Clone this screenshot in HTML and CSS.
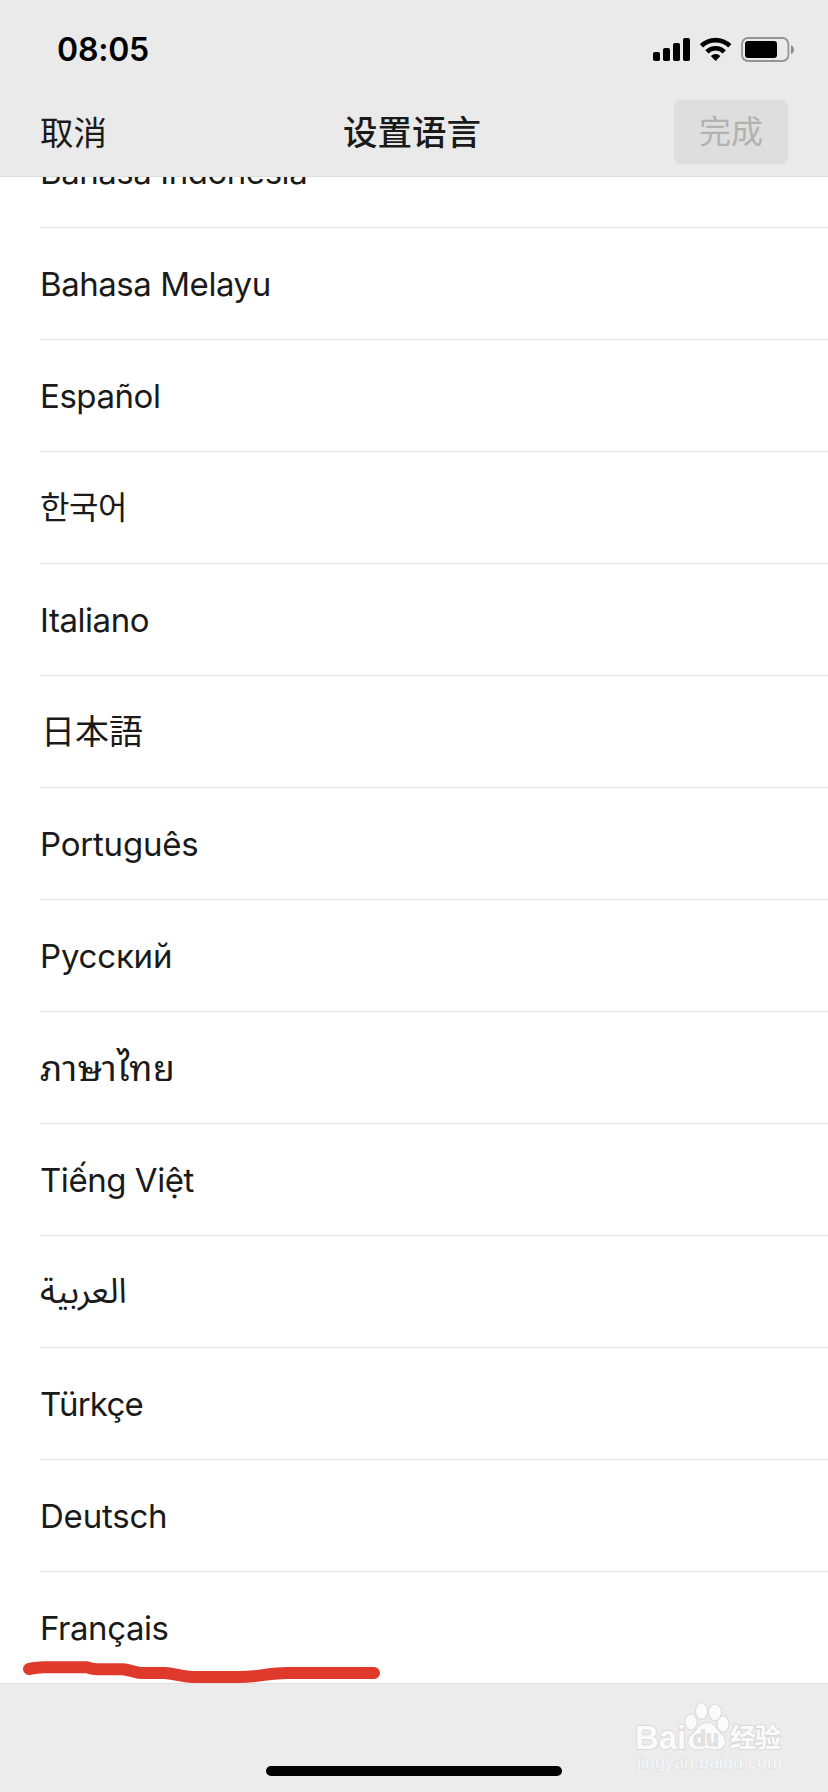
FILE: index.html
```html
<!DOCTYPE html>
<html lang="zh-CN">
<head>
<meta charset="utf-8">
<title>设置语言</title>
<link rel="stylesheet" href="styles.css">
</head>
<body>
<div class="screen">
  <header class="header">
    <div class="status">
      <span class="time">08:05</span>
      <svg class="status-icons" width="144" height="28" viewBox="0 0 144 28">
        <rect x="0" y="15" width="7" height="9" rx="1.8"/>
        <rect x="10" y="11" width="7" height="13" rx="1.8"/>
        <rect x="20" y="6" width="7" height="18" rx="1.8"/>
        <rect x="30" y="1" width="7" height="23" rx="1.8"/>
        <path d="M46.8 7.2A22.5 22.5 0 0 1 78.4 7.2L75.2 10.600A18 18 0 0 0 50 10.600ZM52.3 13.200A14.6 14.6 0 0 1 72.9 13.200L69.7 16.400A10 10 0 0 0 55.5 16.400ZM57.8 19A7 7 0 0 1 67.4 19L62.6 24Z"/>
        <rect class="battery-shell" x="89" y="1" width="46.4" height="23" rx="6"/>
        <rect x="92" y="4" width="32" height="17" rx="3"/>
        <path class="battery-tip" d="M138 8.3C142 10 142 15.4 138 17Z"/>
      </svg>
    </div>
    <nav class="nav">
      <span class="cancel">取消</span>
      <h1 class="title">设置语言</h1>
      <span class="done">完成</span>
    </nav>
  </header>
  <main class="viewport">
    <ul class="list">
      <li class="row"><span class="label tight">Bahasa Indonesia</span></li>
      <li class="row"><span class="label tight">Bahasa Melayu</span></li>
      <li class="row"><span class="label tight">Español</span></li>
      <li class="row"><span class="label korean" lang="ko">한국어</span></li>
      <li class="row"><span class="label tight">Italiano</span></li>
      <li class="row"><span class="label japanese" lang="ja">日本語</span></li>
      <li class="row"><span class="label">Português</span></li>
      <li class="row"><span class="label">Русский</span></li>
      <li class="row"><span class="label thai" lang="th">ภาษาไทย</span></li>
      <li class="row"><span class="label tight">Tiếng Việt</span></li>
      <li class="row"><span class="label arabic" lang="ar">العربية</span></li>
      <li class="row"><span class="label tighter">Türkçe</span></li>
      <li class="row"><span class="label">Deutsch</span></li>
      <li class="row"><span class="label tight">Français</span></li>
    </ul>
  </main>
  <footer class="footer">
    <div class="home-bar"></div>
  </footer>
  <svg class="marker" width="370" height="34" viewBox="0 0 370 34">
    <path d="M14 14Q24 12 30 12.200H72Q76 14 82 14.200H108C116 15 120 18 126 18H150C162 19 168 22 178 22H224C244 22 254 18 272 18H359"/>
  </svg>
  <svg class="watermark" width="160" height="80" viewBox="0 0 160 80">
    <text class="wm-logo" x="3" y="49" textLength="51" lengthAdjust="spacingAndGlyphs">Bai</text>
    <g class="wm-paw">
      <ellipse cx="59" cy="22" rx="5.5" ry="7.5"/>
      <ellipse cx="69.500" cy="11" rx="5.5" ry="7.8"/>
      <ellipse cx="83" cy="12.500" rx="6" ry="7.800"/>
      <ellipse cx="91" cy="24" rx="5.500" ry="7.500"/>
      <path d="M75 23C68 23 66 29 61 34C54 39 55 49 64 49C69 50 71 48 75 48S81 50 86 49C95 48 95 38 88 33C84 28 82 23 75 23Z"/>
    </g>
    <text class="wm-du" x="61" y="46" textLength="26" lengthAdjust="spacingAndGlyphs">du</text>
    <text class="wm-cn" x="98" y="47" textLength="51">经验</text>
    <text class="wm-url" x="5" y="68" textLength="145" lengthAdjust="spacingAndGlyphs">jingyan.baidu.com</text>
  </svg>
</div>
</body>
</html>
```
FILE: styles.css
```css
* { box-sizing: border-box; }
body { margin: 0; background: #ececec; }
.screen {
  position: relative;
  display: flex;
  flex-direction: column;
  width: 828px;
  height: 1792px;
  overflow: hidden;
  color: #1a1a1a;
  font-family: Inter, "Noto Sans CJK SC", sans-serif;
}
.header {
  height: 177px;
  background: #eaeaea;
  border-bottom: 1px solid #dedede;
}
.status {
  display: flex;
  justify-content: space-between;
  height: 88px;
  padding: 30px 26px 0 57px;
  color: #000;
}
.time { font-size: 32px; line-height: 40px; font-weight: 600; letter-spacing: -0.2px; }
.status-icons { margin: 7px 5px 0 0; }
.battery-shell { fill: none; stroke: #949494; stroke-width: 1.8; }
.battery-tip { fill: #8a8a8a; }
.nav {
  display: grid;
  grid-template-columns: 1fr auto 1fr;
  align-items: center;
  height: 88px;
  padding: 0 40px;
}
.cancel { padding-top: 2px; font-size: 33.5px; line-height: 48px; }
.title { margin: 0; padding: 2px 4px 0 0; font-size: 34.5px; line-height: 48px; font-weight: 500; }
.done {
  justify-self: end;
  width: 114px;
  height: 64px;
  border-radius: 6px;
  background: #dedede;
  color: #b2b2b2;
  font-size: 32px;
  line-height: 64px;
  text-align: center;
}
.viewport { height: 1506px; overflow: hidden; background: #fff; }
.list { margin: -61px 0 0 40px; padding: 0; list-style: none; }
.row {
  display: flex;
  align-items: center;
  height: 112px;
  border-bottom: 1px solid #e2e2e2;
}
.label { font-size: 33px; line-height: 48px; letter-spacing: -0.2px; }
.tight { letter-spacing: -0.45px; }
.tighter { letter-spacing: -0.75px; }
.korean { padding-bottom: 5px; font-family: "Noto Sans CJK KR", sans-serif; font-size: 32px; letter-spacing: -0.5px; }
.japanese { padding: 0 0 3px 1px; font-family: "Noto Sans CJK JP", sans-serif; font-size: 34px; letter-spacing: 0; }
.thai { padding-bottom: 6px; font-family: "Noto Sans Thai Looped", "Noto Looped Thai", "Noto Sans Thai", "Noto Sans", sans-serif; font-size: 35.5px; letter-spacing: 0.4px; }
.arabic { font-family: "Noto Sans Arabic", "Noto Sans", sans-serif; font-size: 34.5px; letter-spacing: 0; }
.footer {
  display: flex;
  flex: 1;
  justify-content: center;
  align-items: flex-end;
  padding-bottom: 16px;
  border-top: 1px solid #e0e0e0;
  background: #ececec;
}
.home-bar { width: 296px; height: 10px; border-radius: 5px; background: #000; }
.marker { position: absolute; left: 15px; top: 1655px; }
.marker path { fill: none; stroke: #df392c; stroke-width: 12; stroke-linecap: round; stroke-linejoin: round; }
.watermark { position: absolute; left: 632px; top: 1700px; }
.watermark text, .wm-paw { fill: #fbfbfb; stroke: #dadada; stroke-width: 2; paint-order: stroke; }
.wm-logo { font: 700 34px "Liberation Sans", sans-serif; }
.watermark .wm-du { font: 700 22px "Liberation Sans", sans-serif; fill: #e2e2e2; stroke: #d6d6d6; stroke-width: 1; }
.wm-cn { font: 700 26px "Noto Sans CJK SC", sans-serif; }
.watermark .wm-url { font: 400 17px "Liberation Sans", sans-serif; fill: #f8f8f8; stroke: #dcdcdc; stroke-width: 1; }
```
